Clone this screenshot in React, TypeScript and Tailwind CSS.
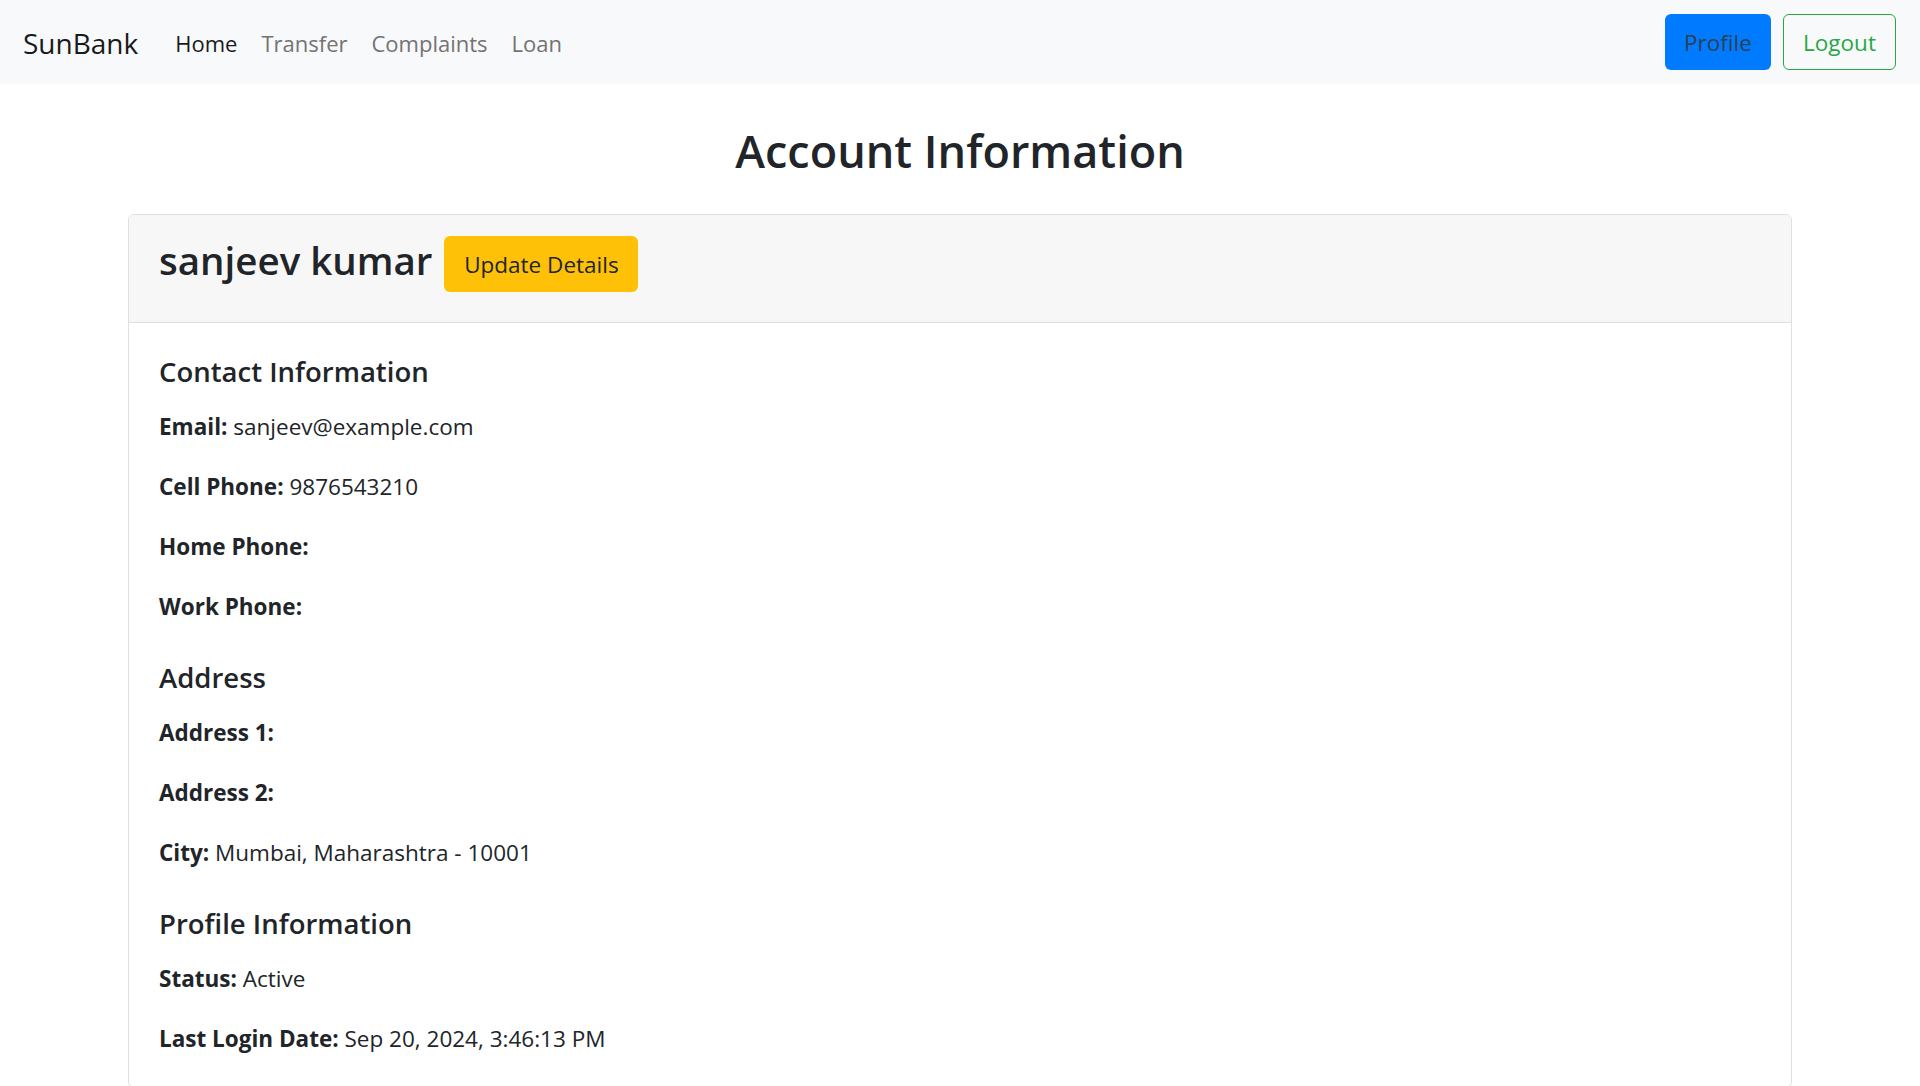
import React from "react";

const Field = ({ label, value, last }: { label: string; value?: string; last?: boolean }) => (
  <p className={`text-[22.5px] leading-[36px] ${last ? "" : "mb-[24px]"}`}>
    <strong className="font-bold">{label}</strong>
    {value ? <span> {value}</span> : null}
  </p>
);

const Heading = ({ children, first }: { children: React.ReactNode; first?: boolean }) => (
  <h5 className={`text-[27.5px] leading-[36px] font-semibold mb-[19px] ${first ? "" : "mt-[11px]"}`}>{children}</h5>
);

export default function App() {
  return (
    <div className="min-h-screen bg-white text-[#212529] font-['Open_Sans',sans-serif]">
      <nav className="h-[84px] bg-[#f8f9fa] flex items-center pl-[23px] pr-[24px]">
        <a className="text-[28px] leading-[42px] text-[#1a1a1a] mr-[25px] pt-[2px]">SunBank</a>
        <ul className="flex items-center text-[22px] leading-[36px] pt-[2px]">
          <li className="px-[12px] py-[12px] text-[#1a1a1a]">Home</li>
          <li className="px-[12px] py-[12px] text-[#737373]">Transfer</li>
          <li className="px-[12px] py-[12px] text-[#737373]">Complaints</li>
          <li className="px-[12px] py-[12px] text-[#737373]">Loan</li>
        </ul>
        <div className="ml-auto flex items-center gap-[12px]">
          <button className="w-[106px] h-[56px] pt-[2px] rounded-[6px] bg-[#007bff] text-[#2d3f52] text-[22.5px] leading-[36px]">
            Profile
          </button>
          <button className="w-[113px] h-[56px] pt-[2px] rounded-[6px] border border-[#28a745] text-[#28a745] text-[22.5px] leading-[36px]">
            Logout
          </button>
        </div>
      </nav>

      <h2 className="text-center text-[45px] leading-[55px] font-semibold mt-[39px] mb-[36px]">Account Information</h2>

      <div className="mx-[128px] border border-[#dfdfdf] rounded-[6px] overflow-hidden">
        <div className="h-[108px] bg-[#f7f7f7] border-b border-[#dfdfdf] px-[30px] pt-[21px] flex items-start">
          <h3 className="text-[38.5px] leading-[50px] font-semibold -mt-[1px]">sanjeev kumar</h3>
          <button className="ml-[12px] w-[194px] h-[56px] pt-[2px] rounded-[6px] bg-[#ffc107] text-[#212529] text-[22.5px] leading-[36px]">
            Update Details
          </button>
        </div>
        <div className="flex flex-col px-[30px] pt-[31px] pb-[30px]">
          <Heading first>Contact Information</Heading>
          <Field label="Email:" value="sanjeev@example.com" />
          <Field label="Cell Phone:" value="9876543210" />
          <Field label="Home Phone:" />
          <Field label="Work Phone:" />
          <Heading>Address</Heading>
          <Field label="Address 1:" />
          <Field label="Address 2:" />
          <Field label="City:" value="Mumbai, Maharashtra - 10001" />
          <Heading>Profile Information</Heading>
          <Field label="Status:" value="Active" />
          <Field label="Last Login Date:" value="Sep 20, 2024, 3:46:13 PM" last />
        </div>
      </div>
    </div>
  );
}
